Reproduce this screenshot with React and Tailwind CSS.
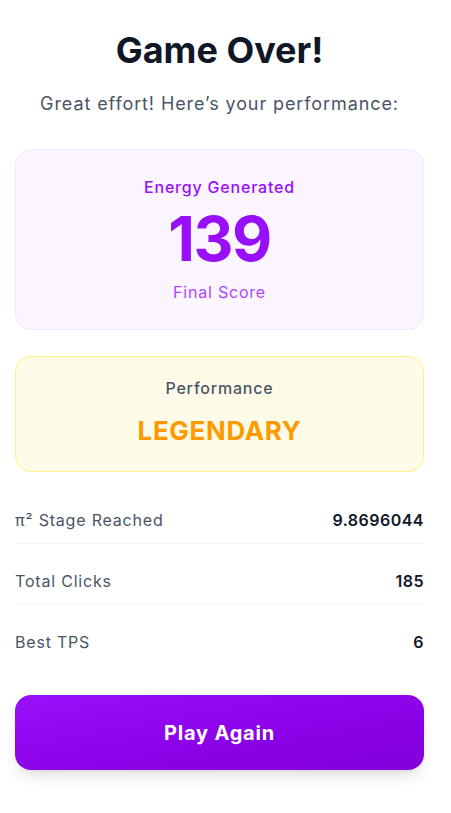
import React from "react";

const rows = [
  ["π² Stage Reached", "9.8696044"],
  ["Total Clicks", "185"],
  ["Best TPS", "6"],
];

export default function App() {
  return (
    <div
      className="min-h-[813px] w-full bg-white pl-[15px] pr-[27px] pt-[30px] text-center"
      style={{ fontFamily: "Inter, 'Noto Sans', sans-serif" }}
    >
      <h1 className="text-4xl font-bold leading-10 text-gray-900">Game Over!</h1>
      <p className="mt-5 text-lg leading-7 tracking-[0.05em] text-gray-600">
        Great effort! Here’s your performance:
      </p>

      <div className="mt-[31px] flex h-[181px] flex-col items-center rounded-2xl border border-purple-100 bg-purple-50 pt-[25px]">
        <div className="text-base font-medium leading-6 tracking-[0.05em] text-purple-600">Energy Generated</div>
        <div className="mt-[9px] text-[62px] font-bold leading-[62px] tracking-tight text-purple-600">139</div>
        <div className="mt-[10px] text-base leading-6 tracking-[0.05em] text-purple-500">Final Score</div>
      </div>

      <div className="mt-[26px] flex h-[116px] flex-col items-center rounded-2xl border border-yellow-200 bg-yellow-50 pt-[19px]">
        <div className="text-base font-medium leading-6 tracking-[0.05em] text-gray-600">Performance</div>
        <div className="mt-[13px] text-[26px] font-bold leading-9 tracking-wide text-amber-500">LEGENDARY</div>
      </div>

      <div className="mt-6 flex flex-col gap-[13px]">
        {rows.map(([k, v], i) => (
          <div
            key={k}
            className={
              "flex items-center justify-between pt-3 pb-[11px] " +
              (i < rows.length - 1 ? "border-b border-gray-100" : "")
            }
          >
            <span className="text-base leading-6 tracking-[0.05em] text-gray-600">{k}</span>
            <span className="text-base font-semibold leading-6 tracking-[0.03em] text-gray-900">{v}</span>
          </div>
        ))}
      </div>

      <button className="mt-[30px] flex h-[75px] w-full items-center justify-center rounded-2xl bg-gradient-to-br from-purple-600 to-purple-700 text-xl font-bold tracking-[0.04em] text-white shadow-lg">
        Play Again
      </button>
    </div>
  );
}
